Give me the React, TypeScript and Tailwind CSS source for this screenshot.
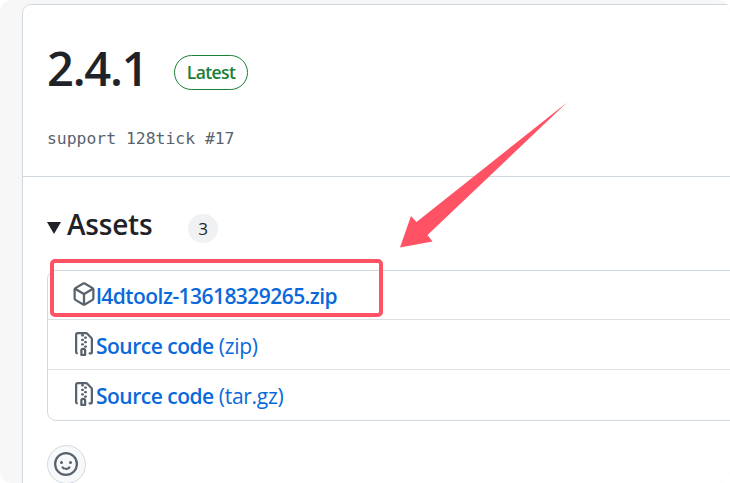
import type { ReactNode } from "react";

const sans = "font-['Open_Sans','Noto_Sans',sans-serif]";

function Icon({ d, className = "" }: { d: string; className?: string }) {
  return (
    <svg viewBox="0 0 16 16" className={`h-6 w-6 shrink-0 fill-[#59636e] ${className}`} aria-hidden="true">
      <path d={d} />
    </svg>
  );
}

const packagePath =
  "m8.878.392 5.25 3.045c.54.314.872.89.872 1.514v6.098a1.75 1.75 0 0 1-.872 1.514l-5.25 3.045a1.75 1.75 0 0 1-1.756 0l-5.25-3.045A1.75 1.75 0 0 1 1 11.049V4.951c0-.624.332-1.201.872-1.514L7.122.392a1.75 1.75 0 0 1 1.756 0ZM7.875 1.69l-4.63 2.685L8 7.133l4.755-2.758-4.63-2.685a.248.248 0 0 0-.25 0ZM2.5 5.677v5.372c0 .09.047.171.125.216l4.625 2.683V8.432Zm6.25 8.271 4.625-2.683a.25.25 0 0 0 .125-.216V5.677L8.75 8.432Z";

const zipPath =
  "M3.5 1.75v11.5c0 .09.048.173.126.217a.75.75 0 0 1-.752 1.298A1.748 1.748 0 0 1 2 13.25V1.75C2 .784 2.784 0 3.75 0h5.586c.464 0 .909.185 1.237.513l2.914 2.914c.329.328.513.773.513 1.237v8.586A1.75 1.75 0 0 1 12.25 15h-.5a.75.75 0 0 1 0-1.5h.5a.25.25 0 0 0 .25-.25V4.664a.25.25 0 0 0-.073-.177L9.513 1.573a.25.25 0 0 0-.177-.073H7.25a.75.75 0 0 1 0 1.5h-.5a.75.75 0 0 1 0-1.5h-3a.25.25 0 0 0-.25.25Zm3.75 8.75h.5c.966 0 1.75.784 1.75 1.75v3a.75.75 0 0 1-.75.75h-2.5a.75.75 0 0 1-.75-.75v-3c0-.966.784-1.75 1.75-1.75ZM6 5.25a.75.75 0 0 1 .75-.75h.5a.75.75 0 0 1 0 1.5h-.5A.75.75 0 0 1 6 5.25Zm.75 2.25h.5a.75.75 0 0 1 0 1.5h-.5a.75.75 0 0 1 0-1.5ZM8 6.75A.75.75 0 0 1 8.75 6h.5a.75.75 0 0 1 0 1.5h-.5A.75.75 0 0 1 8 6.75ZM8.75 3h.5a.75.75 0 0 1 0 1.5h-.5a.75.75 0 0 1 0-1.5ZM8 9.75A.75.75 0 0 1 8.75 9h.5a.75.75 0 0 1 0 1.5h-.5A.75.75 0 0 1 8 9.75Zm-1 2.5v2.25h1v-2.25a.25.25 0 0 0-.25-.25h-.5a.25.25 0 0 0-.25.25Z";

const smileyPath =
  "M8 0a8 8 0 1 1 0 16A8 8 0 0 1 8 0ZM1.5 8a6.5 6.5 0 1 0 13 0 6.5 6.5 0 0 0-13 0Zm3.82 1.636a.75.75 0 0 1 1.038.175l.007.009c.103.118.22.222.35.31.264.178.683.37 1.285.37.602 0 1.02-.192 1.285-.371.13-.088.247-.192.35-.31l.007-.008a.75.75 0 0 1 1.222.87l-.022-.015c.02.013.021.015.021.015v.001l-.001.002-.002.003-.005.007-.014.019a2.066 2.066 0 0 1-.184.213c-.16.166-.338.316-.53.445-.63.418-1.37.638-2.127.629-.946 0-1.652-.308-2.126-.63a3.331 3.331 0 0 1-.715-.657l-.014-.02-.005-.006-.002-.003v-.002h-.001l.613-.432-.614.43a.75.75 0 0 1 .183-1.044ZM12 7a1 1 0 1 1-2 0 1 1 0 0 1 2 0ZM5 8a1 1 0 1 1 0-2 1 1 0 0 1 0 2Zm5.25 2.25.592.416a97.71 97.71 0 0 0-.592-.416Z";

function AssetRow({ icon, children }: { icon: string; children: ReactNode }) {
  return (
    <li className="group flex h-[50px] items-start border-t border-[#dce1e6] pl-6 first:h-[48px] first:border-t-0">
      <Icon d={icon} className="mt-3 group-first:mt-[11px]" />
      <a className="mt-[11px] whitespace-nowrap text-[21px] leading-[30px] tracking-[-0.3px] text-[#0969da] group-first:mt-[10px]">
        {children}
      </a>
    </li>
  );
}

export default function App() {
  return (
    <div className={`relative h-[483px] w-[730px] overflow-hidden rounded-[12px] bg-[#f7f7f7] pt-1 pl-[22px] ${sans}`}>
      <main className="h-[520px] w-[740px] rounded-[9px] border border-[#d1d9e0] bg-white">
        <header className="h-[172px] border-b border-[#d1d9e0] pl-6">
          <div className="flex h-[110px] items-start">
            <h1 className="mt-[31px] w-[127px] text-[47px] leading-[64px] font-[560] tracking-[-1.2px] text-[#1f2328]">2.4.1</h1>
            <span className="mt-[50px] flex h-[35px] w-[74px] items-center justify-center rounded-full border border-[#1a7f37] text-[17.5px] font-semibold tracking-[-0.6px] text-[#1a7f37]">
              Latest
            </span>
          </div>
          <p className="mt-[13px] font-['DejaVu_Sans_Mono',monospace] text-[16.4px] leading-[22px] text-[#59636e]">
            support 128tick #17
          </p>
        </header>
        <section className="pl-6">
          <div className="flex h-[93px] items-start">
            <svg viewBox="0 0 14 12" className="mt-[45px] h-3 w-[14px] fill-[#1f2328]" aria-hidden="true">
              <path d="M0 0h14L7 12Z" />
            </svg>
            <h2 className="mt-[27px] ml-[6px] w-[121px] text-[28px] leading-[40px] font-semibold tracking-[-0.2px] text-[#1f2328]">Assets</h2>
            <span className="mt-[37px] flex h-[29px] w-[30px] items-center justify-center rounded-full bg-[#eff1f3] text-[17px] font-medium text-[#1f2328]">
              3
            </span>
          </div>
          <ul className="h-[151px] rounded-[9px] border border-[#d1d9e0]">
            <AssetRow icon={packagePath}>
              <span className="font-semibold tracking-[-0.55px]">l4dtoolz-13618329265.zip</span>
            </AssetRow>
            <AssetRow icon={zipPath}>
              <span className="font-semibold tracking-[-0.5px]">Source code</span> (zip)
            </AssetRow>
            <AssetRow icon={zipPath}>
              <span className="font-semibold tracking-[-0.5px]">Source code</span> (tar.gz)
            </AssetRow>
          </ul>
          <button className="mt-[24px] flex h-[39px] w-[39px] items-start rounded-full border border-[#d1d9e0] bg-[#f6f8fa] pt-[6px] pl-[6px]">
            <Icon d={smileyPath} />
          </button>
        </section>
      </main>
      <svg viewBox="0 0 730 483" className="pointer-events-none absolute inset-0 h-[483px] w-[730px]" aria-hidden="true">
        <path d="M567 102.5 416.5 222 411 216 400 247.5 432.5 241.5 427.5 235Z" fill="#ff5264" />
        <rect x="52" y="261" width="329" height="54" rx="3" fill="none" stroke="#ff5264" strokeWidth="4" />
      </svg>
    </div>
  );
}
